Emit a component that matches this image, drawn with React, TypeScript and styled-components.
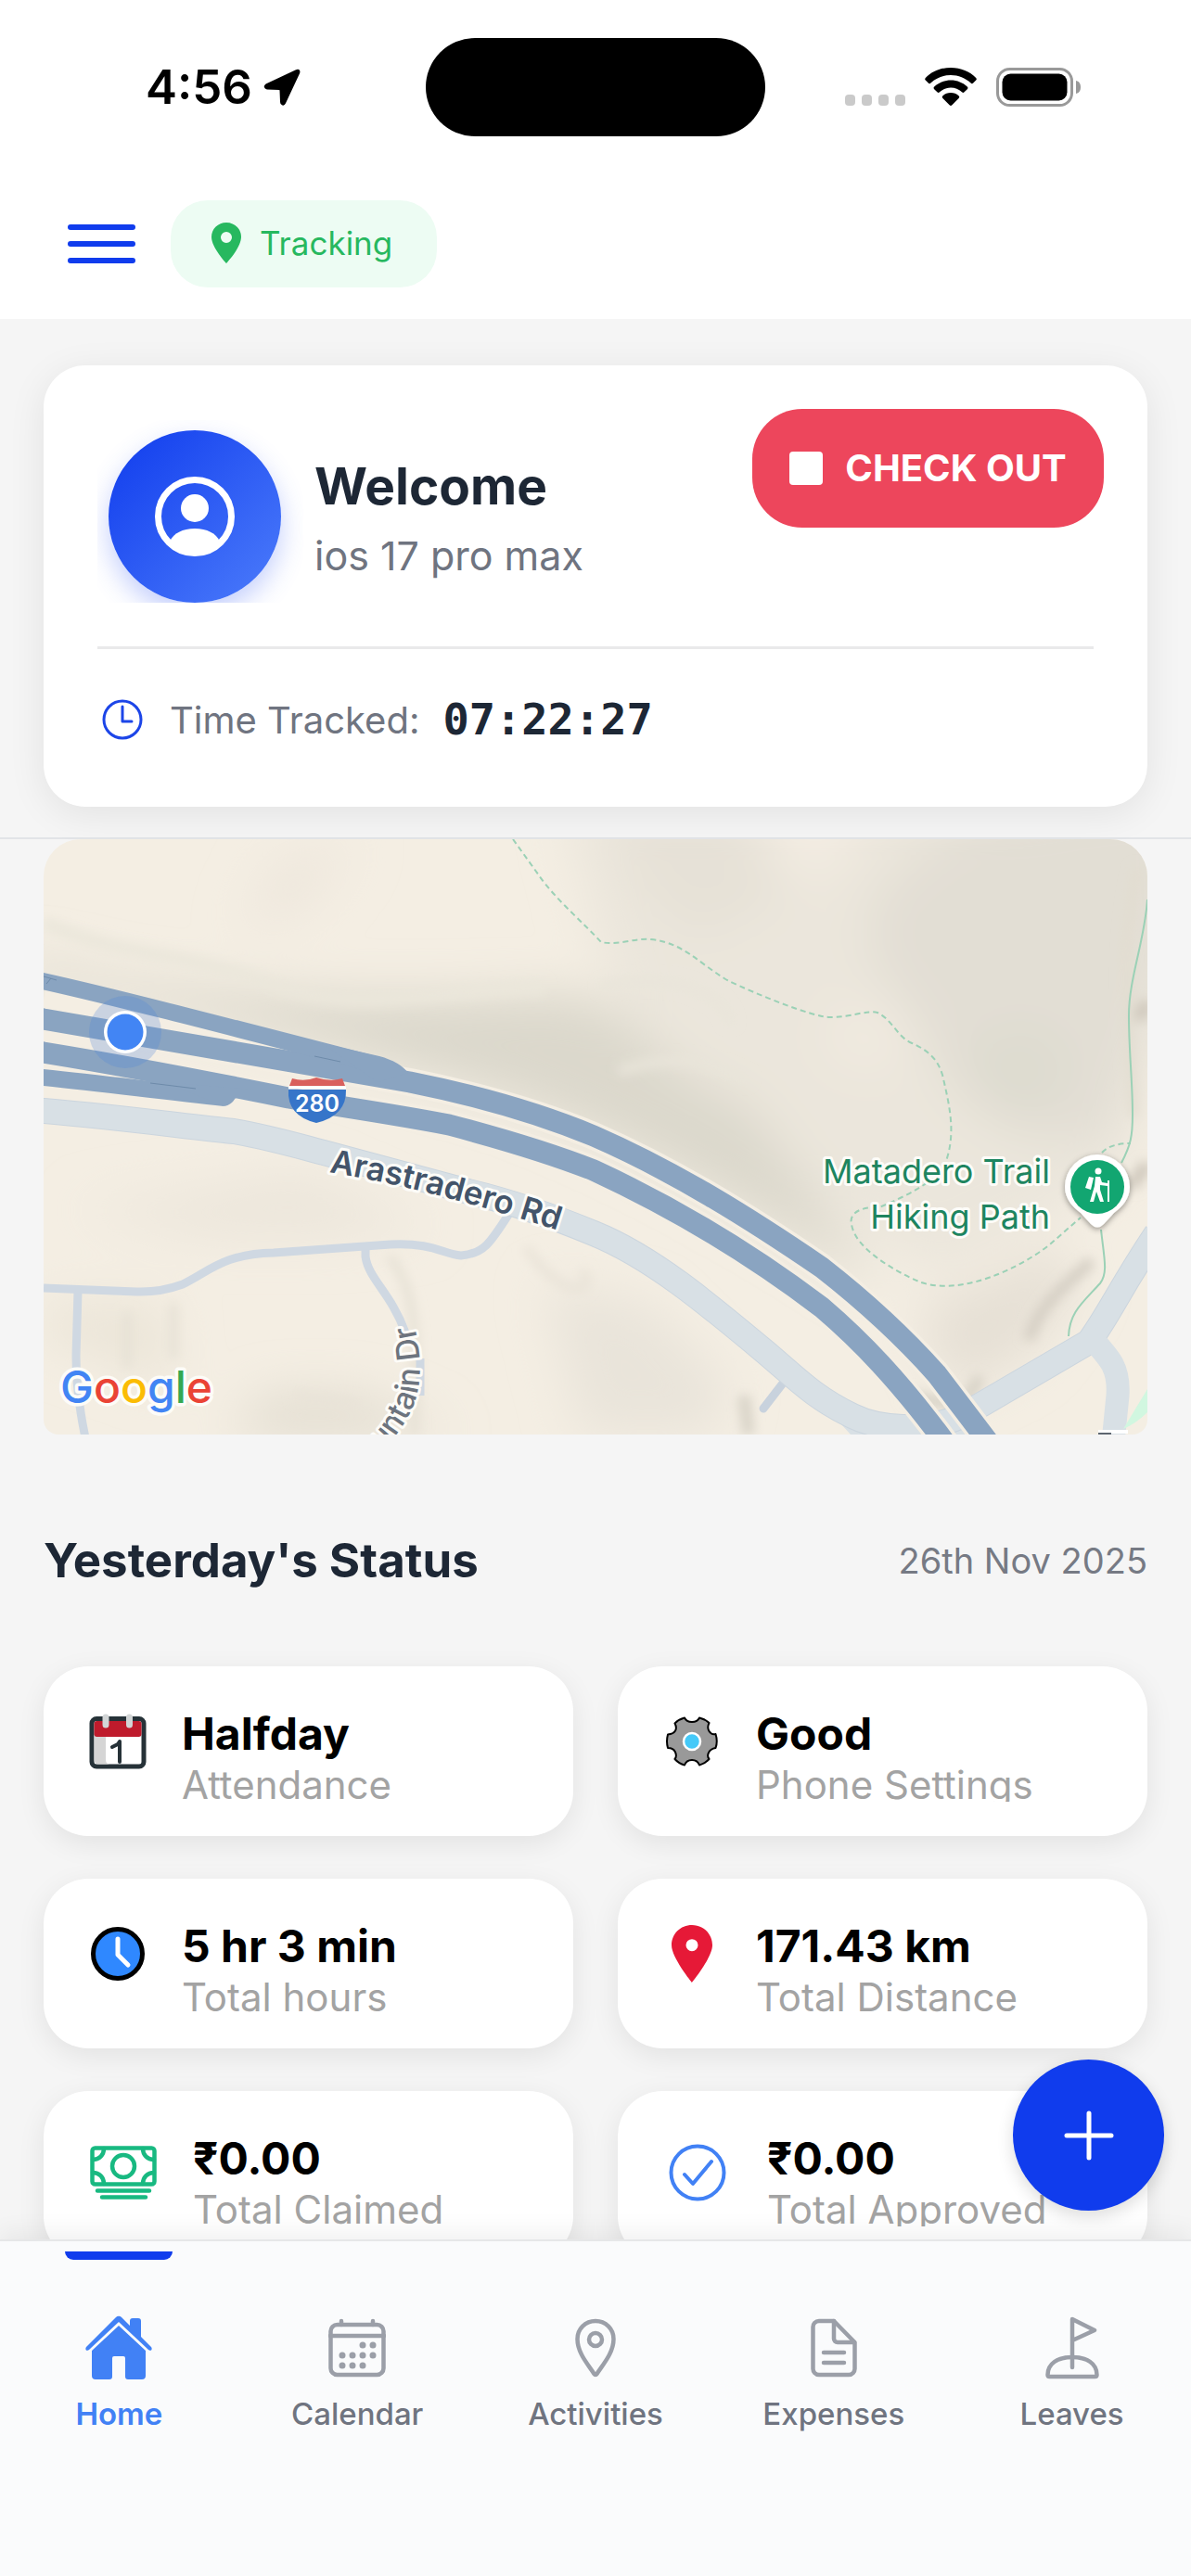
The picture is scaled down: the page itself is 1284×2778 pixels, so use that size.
import React from 'react';
import styled, { createGlobalStyle } from 'styled-components';

const Global = createGlobalStyle`
  *, *::before, *::after { box-sizing: border-box; }
  body { margin: 0; background: #f5f5f5; font-family: Inter, "Liberation Sans", sans-serif; }
  button { font: inherit; border: 0; padding: 0; cursor: pointer; background: none; }
  h1, h2, p { margin: 0; }
  svg { display: block; }
`;

const Screen = styled.div`
  display: flex;
  flex-direction: column;
  height: 100vh;
  background: #f5f5f5;
  overflow: hidden;
`;

const Top = styled.header`
  flex: none;
  background: #fff;
  padding-bottom: 34px;
`;

const StatusBar = styled.div`
  display: grid;
  grid-template-columns: 1fr 366px 1fr;
  align-items: center;
  padding-top: 41px;
`;

const Clock = styled.div`
  display: flex;
  align-items: center;
  gap: 12px;
  padding-left: 157px;
  font-size: 51px;
  line-height: 60px;
  font-weight: 600;
`;

const Island = styled.div`
  height: 106px;
  border-radius: 53px;
  background: #000;
`;

const Indicators = styled.div`
  display: flex;
  align-items: center;
  justify-content: flex-end;
  gap: 21px;
  padding-right: 118px;
`;

const Toolbar = styled.div`
  display: flex;
  align-items: center;
  gap: 38px;
  padding: 69px 73px 0;
`;

const MenuButton = styled.button`
  display: flex;
  flex-direction: column;
  gap: 12px;
  width: 73px;
`;

const MenuLine = styled.span`
  height: 6px;
  border-radius: 3px;
  background: #103ced;
`;

const TrackingPill = styled.div`
  display: flex;
  align-items: center;
  gap: 20px;
  height: 94px;
  padding: 0 48px 2px 44px;
  border-radius: 40px;
  background: #edfcf3;
  color: #27b85f;
  font-size: 35px;
`;

const Content = styled.main`
  position: relative;
  flex: 1;
  min-height: 0;
  overflow: hidden;
`;

const WelcomeArea = styled.section`
  padding: 50px 47px 33px;
  border-bottom: 2px solid #e2e4e7;
`;

const WelcomeCard = styled.div`
  padding: 47px 47px 0 58px;
  height: 476px;
  border-radius: 45px;
  background: #fff;
  box-shadow: 0 8px 40px rgba(0, 0, 0, 0.08);
`;

const Profile = styled.div`
  display: flex;
  align-items: flex-start;
  height: 259px;
  margin-right: 11px;
  border-bottom: 3px solid #e9e9ea;
`;

const AvatarFrame = styled.div`
  margin-top: 12px;
  padding: 11px 24px 0 12px;
  overflow: hidden;
`;

const Avatar = styled.div`
  display: grid;
  place-items: center;
  width: 186px;
  height: 186px;
  border-radius: 50%;
  background: linear-gradient(135deg, #103ced, #4c7cfb);
  box-shadow: 0 12px 28px rgba(60, 95, 245, 0.3);
`;

const Greeting = styled.div`
  flex: 1;
  padding: 50px 0 0 12px;
`;

const Name = styled.h1`
  font-size: 55px;
  line-height: 66px;
  font-weight: 700;
  color: #1d2735;
`;

const Device = styled.p`
  padding-top: 14px;
  font-size: 43px;
  line-height: 56px;
  color: #6f7480;
`;

const CheckOut = styled.button`
  display: flex;
  flex: none;
  align-items: center;
  justify-content: center;
  gap: 24px;
  width: 379px;
  height: 128px;
  margin-right: -11px;
  border-radius: 54px;
  background: #ed465c;
  color: #fff;
  font-size: 40px;
  font-weight: 700;
  line-height: 48px;
`;

const StopMark = styled.span`
  width: 36px;
  height: 36px;
  border-radius: 4px;
  background: #fff;
`;

const TimeRow = styled.div`
  display: flex;
  align-items: center;
  height: 152px;
  padding-left: 5px;
`;

const TimeLabel = styled.span`
  padding: 2px 25px 0 29px;
  font-size: 40px;
  line-height: 48px;
  color: #6f7480;
`;

const Timer = styled.span`
  font-family: "DejaVu Sans Mono", "Liberation Mono", monospace;
  font-size: 47px;
  line-height: 56px;
  font-weight: 700;
  color: #1d2735;
`;

const MapFrame = styled.section`
  margin: 0 47px;
  border-radius: 40px 40px 16px 16px;
  overflow: hidden;

  svg { width: 100%; height: auto; }
`;

const Label = styled.text`
  paint-order: stroke;
  stroke: #fdfcf8;
  stroke-linejoin: round;
`;

const StatusHeader = styled.div`
  display: flex;
  align-items: center;
  justify-content: space-between;
  padding: 103px 47px 82px;
`;

const StatusTitle = styled.h2`
  font-size: 51px;
  line-height: 65px;
  font-weight: 700;
  color: #1d2735;
`;

const StatusDate = styled.span`
  font-size: 38px;
  line-height: 48px;
  color: #767a84;
`;

const StatGrid = styled.section`
  display: grid;
  grid-template-columns: 1fr 1fr;
  gap: 46px 48px;
  padding: 0 47px;
`;

const StatCard = styled.article`
  display: flex;
  align-items: flex-start;
  gap: 31px;
  height: 183px;
  padding: 37px 40px 0 42px;
  border-radius: 48px;
  background: #fff;
  box-shadow: 0 8px 30px rgba(0, 0, 0, 0.08);
`;

const StatIcon = styled.div<{ $wide?: boolean }>`
  display: grid;
  place-items: center;
  flex: none;
  width: ${(p) => (p.$wide ? 88 : 76)}px;
  height: ${(p) => (p.$wide ? 102 : 88)}px;
`;

const StatValue = styled.div`
  padding-top: 6px;
  font-size: 48px;
  line-height: 60px;
  font-weight: 700;
  color: #000;
`;

const StatLabel = styled.div`
  height: 43px;
  font-size: 42px;
  line-height: 50px;
  color: #a3a3a3;
  overflow: hidden;
`;

const AddButton = styled.button`
  position: absolute;
  right: 29px;
  bottom: 31px;
  display: grid;
  place-items: center;
  width: 163px;
  height: 163px;
  border-radius: 50%;
  background: #103ced;
  box-shadow: 0 6px 18px rgba(0, 0, 0, 0.14);
`;

const Nav = styled.nav`
  position: relative;
  display: grid;
  grid-template-columns: repeat(5, 1fr);
  flex: none;
  height: 363px;
  padding-top: 11px;
  border-top: 2px solid #e6e7e8;
  background: #fafbfc;
  box-shadow: 0 -8px 24px rgba(0, 0, 0, 0.06);
`;

const Tab = styled.button<{ $active?: boolean }>`
  display: flex;
  flex-direction: column;
  align-items: center;
  color: ${(p) => (p.$active ? '#4181f5' : '#6f7480')};
  font-size: 33px;
  line-height: 40px;
  font-weight: ${(p) => (p.$active ? 600 : 500)};
`;

const Marker = styled.span<{ $on?: boolean }>`
  width: 116px;
  height: 9px;
  margin-bottom: 58px;
  border-radius: 0 0 9px 9px;
  background: ${(p) => (p.$on ? '#103ced' : 'transparent')};
`;

const TabIcon = styled.span`
  height: 80px;
  padding-top: 2px;
  margin-bottom: 8px;
`;

function ArrowIcon() {
  return (
    <svg width="40" height="40" viewBox="0 0 40 40" aria-hidden="true">
      <path d="M36 2 3 17.500c-2 1.500-1.500 3.500 1 4l13 .500c1 0 1.500.5 1.500 1.500L19 36c0 3 3 3.500 4 1.200L38 5c1-2 0-4-2-3z" fill="#000" stroke="#000" strokeWidth="2" strokeLinejoin="round" />
    </svg>
  );
}

function WifiIcon() {
  return (
    <svg width="56" height="42" viewBox="0 0 56 42" aria-hidden="true">
      <path d="M28 0C17 0 7.500 4 .8 11c-.8.900-.8 1.800 0 2.600l3 3c.8.800 1.800.8 2.600 0C12.300 11 19.700 8 28 8s15.700 3 21.600 8.600c.8.800 1.800.8 2.600 0l3-3c.8-.8.8-1.700 0-2.600C48.500 4 39 0 28 0z" />
      <path d="M28 13.500c-7 0-13.200 2.700-17.800 7-.9.900-.9 1.800 0 2.700l3.200 3.100c.8.800 1.700.8 2.600 0 3.300-3 7.400-4.700 12-4.700s8.700 1.700 12 4.700c.9.800 1.800.8 2.600 0l3.200-3.100c.9-.9.900-1.800 0-2.700-4.600-4.300-10.800-7-17.800-7z" />
      <path d="M28 27c-3.300 0-6.200 1.200-8.500 3.200-1 .9-1 1.800-.1 2.700l7.200 7.400c.9.900 1.900.9 2.800 0l7.200-7.400c.9-.9.900-1.800-.1-2.700C34.200 28.200 31.300 27 28 27z" />
    </svg>
  );
}

function BatteryIcon() {
  return (
    <svg width="92" height="42" viewBox="0 0 92 42" aria-hidden="true">
      <rect x="1.500" y="1.500" width="80" height="39" rx="13" fill="none" stroke="#999" strokeWidth="3" />
      <rect x="6.500" y="6.500" width="70" height="29" rx="9" />
      <path d="M86 14c4 1 5 4 5 7s-1 6-5 7z" fill="#999" />
    </svg>
  );
}

const DotsSvg = styled.svg`
  margin-top: 27px;
`;

function SignalDots() {
  return (
    <DotsSvg width="65" height="12" viewBox="0 0 65 12" fill="#cacaca" aria-hidden="true">
      {[0, 18, 36, 54].map((x) => <rect key={x} x={x} width="11" height="12" rx="4" />)}
    </DotsSvg>
  );
}

function DistancePin() {
  return (
    <svg width="44" height="62" viewBox="0 0 44 62" aria-hidden="true">
      <path fillRule="evenodd" fill="#e61937" d="M22 0C9.500 0 0 9.600 0 21.700 0 35 22 62 22 62s22-27 22-40.300C44 9.600 34.500 0 22 0zm0 15.200a6.500 6.500 0 1 1 0 13 6.500 6.500 0 0 1 0-13z" />
    </svg>
  );
}

function TrackPin() {
  return (
    <svg width="32" height="44" viewBox="0 0 32 44" aria-hidden="true">
      <path fillRule="evenodd" fill="#27b85f" d="M16 0C7 0 0 7 0 15.500 0 27 16 44 16 44s16-17 16-28.500C32 7 25 0 16 0zm0 10a6 6 0 1 1 0 12 6 6 0 0 1 0-12z" />
    </svg>
  );
}

function PersonIcon() {
  return (
    <svg width="86" height="86" viewBox="0 0 86 86" aria-hidden="true">
      <defs><clipPath id="face"><circle cx="43" cy="43" r="41" /></clipPath></defs>
      <circle cx="43" cy="43" r="39.500" fill="none" stroke="#fff" strokeWidth="7" />
      <circle cx="43" cy="34" r="15" fill="#fff" />
      <path d="M16 70c4-9 14-14 27-14s23 5 27 14l-8 16H24z" fill="#fff" clipPath="url(#face)" />
    </svg>
  );
}

function TimeIcon() {
  return (
    <svg width="44" height="44" viewBox="0 0 44 44" fill="none" stroke="#1c45e8" strokeWidth="3" strokeLinecap="round" strokeLinejoin="round" aria-hidden="true">
      <circle cx="22" cy="22" r="20" />
      <path d="M22 8v16h10" />
    </svg>
  );
}

function CalendarStat() {
  return (
    <svg width="62" height="62" viewBox="0 0 62 62" aria-hidden="true">
      <rect x="3" y="6.500" width="56" height="51.500" rx="5" fill="#fff" stroke="#263238" strokeWidth="5" />
      <path d="M5.500 24H18v27q0 4 4 4.500H10a4.500 4.500 0 0 1-4.500-4.500z" fill="#d5d5d5" />
      <path d="M5.500 23V12a3 3 0 0 1 3-3h45a3 3 0 0 1 3 3v11q0 3-3 3h-45q-3 0-3-3z" fill="#bf1b2c" />
      <path d="M18 5v8M43.500 5v8" stroke="#d2d5d6" strokeWidth="7" strokeLinecap="round" />
      <path d="M25 37l6-3 2-3v22" fill="none" stroke="#263238" strokeWidth="4" strokeLinecap="round" strokeLinejoin="round" />
    </svg>
  );
}

function GearIcon() {
  return (
    <svg width="56" height="54" viewBox="0 0 56 54" aria-hidden="true">
      <path d="M20 1.500Q22 6 28 6T36 1.500Q42 3 46.500 7Q44 12 46.500 16T53.500 19Q56 27 53.500 34Q48 35 46 39T46.500 46Q42 51 36 52.500Q34 47 28 47T20 52.500Q14 51 9.500 46Q12 43 10 38.500T2 34Q0 27 2 19.500Q8 19 10 15.500T9.500 7.500Q14 3 20 1.500z" fill="#999" stroke="#000" strokeWidth="2" strokeLinejoin="round" />
      <circle cx="28" cy="27" r="9" fill="#44c9f8" stroke="#fff" strokeWidth="2.500" />
    </svg>
  );
}

function HoursIcon() {
  return (
    <svg width="58" height="58" viewBox="0 0 58 58" aria-hidden="true">
      <circle cx="29" cy="29" r="26.500" fill="#2f88ff" stroke="#000" strokeWidth="5" />
      <path d="M29 13v17l11 11" fill="none" stroke="#fff" strokeWidth="5" strokeLinecap="round" strokeLinejoin="round" />
    </svg>
  );
}

function CashIcon() {
  return (
    <svg width="72" height="58" viewBox="0 0 72 58" fill="none" stroke="#18b981" strokeWidth="4.500" strokeLinecap="round" aria-hidden="true">
      <rect x="2.500" y="2.500" width="67" height="39" rx="3" />
      <circle cx="36" cy="22" r="12" />
      <path d="M15 3c0 7-5 12-12 12M57 3c0 7 5 12 12 12M15 41c0-7-5-12-12-12M57 41c0-7 5-12 12-12" />
      <path d="M8 48.500h56M13 55.500h47" />
    </svg>
  );
}

function ApprovedIcon() {
  return (
    <svg width="62" height="62" viewBox="0 0 62 62" fill="none" stroke="#4181f5" strokeWidth="4" strokeLinecap="round" strokeLinejoin="round" aria-hidden="true">
      <circle cx="31" cy="31" r="28.500" />
      <path d="M17 33l9 10 20-24" />
    </svg>
  );
}

function HomeIcon() {
  return (
    <svg width="72" height="70" viewBox="0 0 72 70" fill="#4181f5" aria-hidden="true">
      <path d="M36 11 65 38v27a4 4 0 0 1-4 4H46a3 3 0 0 1-3-3V46a2 2 0 0 0-2-2H31a2 2 0 0 0-2 2v20a3 3 0 0 1-3 3H11a4 4 0 0 1-4-4V38z" />
      <path d="M33 2a4 4 0 0 1 6 0l9 9V6a3 3 0 0 1 3-3h6a3 3 0 0 1 3 3v17l11 11c2 3-1 5-3 3L36 7 4 37c-2 2-5 0-3-3z" />
    </svg>
  );
}

const lineIcon = { fill: 'none', stroke: '#9b9fa8', strokeWidth: 4.5, strokeLinecap: 'round', strokeLinejoin: 'round' } as const;

function CalendarIcon() {
  const dots = [[37, 28], [48, 28], [15, 39], [26, 39], [37, 39], [48, 39], [15, 50], [26, 50], [37, 50]];
  return (
    <svg width="62" height="70" viewBox="0 -4 62 70" {...lineIcon} aria-hidden="true">
      <rect x="2.500" y="6" width="57" height="54" rx="7" />
      <path d="M2 18h58M14 2v4M48 2v4" />
      {dots.map(([x, y]) => <circle key={`${x}-${y}`} cx={x} cy={y} r="3.500" fill="#9b9fa8" stroke="none" />)}
    </svg>
  );
}

function ActivityIcon() {
  return (
    <svg width="44" height="70" viewBox="0 -4 44 70" {...lineIcon} aria-hidden="true">
      <path d="M22 2C11 2 2.500 10.500 2.500 21.500 2.500 37 15 50 20.500 59c.8 1.300 2.200 1.300 3 0C29 50 41.500 37 41.500 21.500 41.500 10.500 33 2 22 2z" />
      <circle cx="22" cy="22" r="7" />
    </svg>
  );
}

function ExpenseIcon() {
  return (
    <svg width="50" height="70" viewBox="0 -4 50 70" {...lineIcon} aria-hidden="true">
      <path d="M25 2H9a6.500 6.500 0 0 0-6.500 7v44a6.500 6.500 0 0 0 6.500 7h32a6.500 6.500 0 0 0 6.500-7V25z" />
      <path d="M25 2v19a4 4 0 0 0 4 4h18M14 36h22M14 47h22" />
    </svg>
  );
}

function LeaveIcon() {
  return (
    <svg width="58" height="70" viewBox="0 -2 58 70" {...lineIcon} aria-hidden="true">
      <path d="M29 54V2l24 12-24 11" />
      <path d="M2.500 62c0-12 10.500-19 26.500-19s26.500 7 26.500 19c0 1.500-1 2-2 2h-49c-1 0-2-.5-2-2z" />
    </svg>
  );
}

function PlusIcon() {
  return (
    <svg width="54" height="54" viewBox="0 0 54 54" stroke="#fff" strokeWidth="5" strokeLinecap="round" aria-hidden="true">
      <path d="M27 3v48M3 27h48" />
    </svg>
  );
}

const upperLane = 'M-10 192 0 194C121 214 248 237 395 262C470 277 540 298 593 320C680 358 760 408 839 462C880 494 922 531 963 577L1020 652';
const lowerLane = 'M-10 228 0 230C80 243 180 262 264 279C330 290 380 297 437 308C490 322 545 338 593 357C675 395 760 445 839 505C880 540 922 583 975 655';
const frontage = 'M-10 292 0 293C80 300 140 308 205 315C245 322 275 331 302 338L458 380C500 390 540 403 593 425C655 450 716 501 778 553C810 580 830 602 872 622C900 636 950 640 990 622L1127 542C1150 510 1160 485 1200 425';

function AreaMap() {
  return (
    <svg viewBox="0 0 1190 642" role="img" aria-label="Map of your location">
      <defs>
        <filter id="hill" x="-20%" y="-20%" width="140%" height="140%"><feGaussianBlur stdDeviation="26" /></filter>
        <filter id="ridge" x="-20%" y="-20%" width="140%" height="140%"><feGaussianBlur stdDeviation="6" /></filter>
        <filter id="drop" x="-30%" y="-30%" width="160%" height="160%"><feDropShadow dx="0" dy="2" stdDeviation="3" floodOpacity="0.4" /></filter>
        <path id="arastradero" d="M308 359Q430 379 600 437" />
        <path id="mountain" d="M340 680Q382 650 398 612Q412 580 400 524" />
      </defs>
      <rect width="1190" height="642" fill="#f4eee3" />
      <g filter="url(#hill)">
        <path d="M560-40H1240V120L1160 370 960 470 850 400 640 240 600 120z" fill="#ebe6dc" />
        <path d="M-20 125C100 165 300 178 560 165C640 175 640 240 760 290C820 370 860 420 900 490C800 420 640 330 500 280C330 230 130 180-20 150z" fill="#dbd8cc" />
        <path d="M900 60C960-10 1040-60 1240-60C1240 40 1170 280 1150 320C1080 340 1000 310 970 250C950 180 860 140 900 60z" fill="#e2ded4" />
        <path d="M980 240 1060 200 1110 240 1060 310z" fill="#dddbcf" />
        <path d="M610-40 740-40 800 60 700 110 640 50z" fill="#e6e1d7" />
        <path d="M760-40 900-40 830 50z" fill="#f4ede3" />
        <path d="M250 20 340 0 280 80 210 100z" fill="#eee7dd" />
        <path d="M870 180 930 200 900 250 840 220z" fill="#f2ebe1" />
        <path d="M30 400 280 360 420 420 300 430 180 430z" fill="#ece6db" />
        <path d="M540 480 650 500 740 590 720 642 580 642z" fill="#e9e4da" />
        <path d="M940 510 1090 440 1120 480 1060 560 980 600z" fill="#e6e0d5" />
        <path d="M240 600 340 600 440 642 200 642z" fill="#e0dbcf" />
        <path d="M0 500 130 500 140 590 60 560 0 540z" fill="#ebe5d8" />
      </g>
      <g filter="url(#ridge)" fill="none">
        <path d="M0 90C90 130 150 120 240 155S400 165 540 160" stroke="#ebe7db" strokeWidth="14" />
        <path d="M600 160C680 140 740 170 740 200M620 250C680 230 720 240 760 260" stroke="#e9e5da" strokeWidth="10" />
        <path d="M1180 30C1160 110 1168 200 1175 300" stroke="#e2ddd0" strokeWidth="10" />
        <path d="M1130 455C1090 490 1070 510 1062 540" stroke="#d5cfc4" strokeWidth="12" />
        <path d="M1190 350 1172 375M1190 175 1180 195" stroke="#d0c9bd" strokeWidth="14" />
        <path d="M930 600 990 612 1010 580M755 600 760 642" stroke="#d8d3c7" strokeWidth="13" />
        <path d="M372 450C410 490 400 580 400 642M140 500V560M90 510V570" stroke="#e6e1d5" strokeWidth="9" />
        <path d="M520 440C560 500 600 490 580 465M270 600 340 610" stroke="#e9e3d8" strokeWidth="9" />
      </g>

      <g fill="none" stroke="#cfd8e2" strokeWidth="9" strokeLinejoin="round">
        <path d="M0 484 100 488Q125 489 150 480C180 465 195 447 248 446L374 437C420 435 430 447 450 449C475 447 482 435 503 402" />
        <path d="M347 440V450C350 474 375 490 390 532M406 560V600" />
        <path d="M37 488 35 557Q35 600 46 650" />
        <path d="M776 614 796 588" stroke="#c8d2dd" strokeLinecap="round" />
      </g>
      <path d="M830 598Q920 645 990 622L1020 642H870z" fill="#d8e0e5" />
      <path d={frontage} fill="none" stroke="#cbd5de" strokeWidth="28" />
      <path d={frontage} fill="none" stroke="#d8e0e5" strokeWidth="26" />
      <path d="M1127 535C1150 560 1160 570 1158 600L1153 650" fill="none" stroke="#d8e0e5" strokeWidth="25" />
      <path d="M1190 593V618Q1178 630 1164 636z" fill="#d1f7e0" />
      <path d="M1137 639h32" stroke="#fff" strokeWidth="4" />
      <path d="M1137 641h14" stroke="#5d6670" strokeWidth="2" />

      <g fill="none" stroke="#f4eee3">
        <path d={upperLane} strokeWidth="30" />
        <path d={lowerLane} strokeWidth="30" />
        <path d="M0 174 230 215" strokeWidth="24" />
      </g>
      <g fill="none" stroke="#8aa4c1" strokeWidth="23">
        <path d={upperLane} />
        <path d={lowerLane} />
        <path d="M-10 151C60 166 180 197 365 245" strokeWidth="18" />
        <path d="M-10 256C60 263 120 271 195 279" strokeWidth="18" />
      </g>
      <path d="M300 220 362 234Q384 240 393 252L360 262z M130 262 195 288Q202 287 207 279L225 270z" fill="#8aa4c1" />
      <path d="M0 148 14 152M3 156 8 150M115 263 164 269M292 234 320 240" stroke="#6e8baa" strokeWidth="1" />

      <g fill="none" stroke="#9bd1b6" strokeWidth="2">
        <g strokeDasharray="6 4">
          <path d="M506 0 534 39C551 64 584 92 601 111C618 115 640 106 655 108C690 112 704 132 737 152C770 168 830 192 848 192C870 192 888 184 899 187C914 194 920 212 934 219C955 228 964 238 969 254C976 285 984 315 973 347C965 368 930 385 901 397C880 396 868 404 871 415C874 440 915 465 946 478C1000 495 1070 450 1086 436L1118 408" />
          <path d="M1141 338Q1150 328 1172 328" />
        </g>
        <path d="M1190 65C1187 110 1170 150 1170 190C1170 230 1174 260 1174 297C1174 320 1172 330 1162 349M1140 421C1143 450 1148 468 1139 479C1120 500 1106 510 1105 536" />
      </g>

      <circle cx="88" cy="208" r="39" fill="#4c83dd" opacity="0.25" />
      <circle cx="88" cy="208" r="23" fill="#fff" />
      <circle cx="88" cy="208" r="19.500" fill="#4285f4" />

      <path d="M265 266 268 258Q281 262 294 257Q309 262 322 258L325 266z" fill="#d9605d" />
      <path d="M264 270H326Q327 298 294 306Q262 298 264 270z" fill="#3675c9" />
      <path d="M264 268H326" stroke="#fff" strokeWidth="3" />
      <text x="295" y="294" fill="#fff" fontSize="25" fontWeight="600" textAnchor="middle">280</text>

      <Label fill="#43546a" fontSize="35" fontWeight="600" strokeWidth="6"><textPath href="#arastradero">Arastradero Rd</textPath></Label>
      <Label fill="#6d747e" fontSize="34" fontWeight="500" strokeWidth="6" textAnchor="end"><textPath href="#mountain" startOffset="100%">Mountain Dr</textPath></Label>
      <Label fill="#1e8560" fontSize="36" fontWeight="400" strokeWidth="6" textAnchor="end" x="1085" y="371">Matadero Trail</Label>
      <Label fill="#1e8560" fontSize="36" fontWeight="400" strokeWidth="6" textAnchor="end" x="1085" y="420">Hiking Path</Label>

      <path d="M1136 340a35 35 0 0 1 35 35c0 13-9 22-17 28l-11 12q-7 7-14 0l-11-12c-8-6-17-15-17-28a35 35 0 0 1 35-35z" fill="#fff" filter="url(#drop)" />
      <circle cx="1136" cy="375" r="29" fill="#12a671" />
      <circle cx="1137" cy="358" r="3.500" fill="#fff" />
      <path d="M1127 364l5 1-3 13-6-2z" fill="#fff" />
      <path d="M1134 364h5l2 6 6 1v-3h2v23h-2v-17l-8-1v5l4 13h-4l-4-11-3 11h-4l5-17z" fill="#fff" />

      <Label x="18" y="608" fontSize="48" fontWeight="500" strokeWidth="7">
        <tspan fill="#4285f4">G</tspan><tspan fill="#ea4335">o</tspan><tspan fill="#fbbc04">o</tspan><tspan fill="#4285f4">g</tspan><tspan fill="#34a853">l</tspan><tspan fill="#ea4335">e</tspan>
      </Label>
    </svg>
  );
}

const stats = [
  { value: 'Halfday', label: 'Attendance', icon: <CalendarStat /> },
  { value: 'Good', label: 'Phone Settings', icon: <GearIcon /> },
  { value: '5 hr 3 min', label: 'Total hours', icon: <HoursIcon /> },
  { value: '171.43 km', label: 'Total Distance', icon: <DistancePin /> },
  { value: '₹0.00', label: 'Total Claimed', icon: <CashIcon />, wide: true },
  { value: '₹0.00', label: 'Total Approved', icon: <ApprovedIcon />, wide: true },
];

const tabs = [
  { label: 'Home', icon: <HomeIcon />, active: true },
  { label: 'Calendar', icon: <CalendarIcon /> },
  { label: 'Activities', icon: <ActivityIcon /> },
  { label: 'Expenses', icon: <ExpenseIcon /> },
  { label: 'Leaves', icon: <LeaveIcon /> },
];

export default function App() {
  return (
    <Screen>
      <Global />
      <Top>
        <StatusBar>
          <Clock>4:56<ArrowIcon /></Clock>
          <Island />
          <Indicators><SignalDots /><WifiIcon /><BatteryIcon /></Indicators>
        </StatusBar>
        <Toolbar>
          <MenuButton aria-label="Open menu"><MenuLine /><MenuLine /><MenuLine /></MenuButton>
          <TrackingPill><TrackPin />Tracking</TrackingPill>
        </Toolbar>
      </Top>

      <Content>
        <WelcomeArea>
          <WelcomeCard>
            <Profile>
              <AvatarFrame><Avatar><PersonIcon /></Avatar></AvatarFrame>
              <Greeting>
                <Name>Welcome</Name>
                <Device>ios 17 pro max</Device>
              </Greeting>
              <CheckOut><StopMark />CHECK OUT</CheckOut>
            </Profile>
            <TimeRow>
              <TimeIcon />
              <TimeLabel>Time Tracked:</TimeLabel>
              <Timer>07:22:27</Timer>
            </TimeRow>
          </WelcomeCard>
        </WelcomeArea>

        <MapFrame><AreaMap /></MapFrame>

        <StatusHeader>
          <StatusTitle>Yesterday's Status</StatusTitle>
          <StatusDate>26th Nov 2025</StatusDate>
        </StatusHeader>

        <StatGrid>
          {stats.map((s) => (
            <StatCard key={s.label}>
              <StatIcon $wide={s.wide}>{s.icon}</StatIcon>
              <div>
                <StatValue>{s.value}</StatValue>
                <StatLabel>{s.label}</StatLabel>
              </div>
            </StatCard>
          ))}
        </StatGrid>

        <AddButton aria-label="Add"><PlusIcon /></AddButton>
      </Content>

      <Nav>
        {tabs.map((t) => (
          <Tab key={t.label} $active={t.active}>
            <Marker $on={t.active} />
            <TabIcon>{t.icon}</TabIcon>
            {t.label}
          </Tab>
        ))}
      </Nav>
    </Screen>
  );
}
